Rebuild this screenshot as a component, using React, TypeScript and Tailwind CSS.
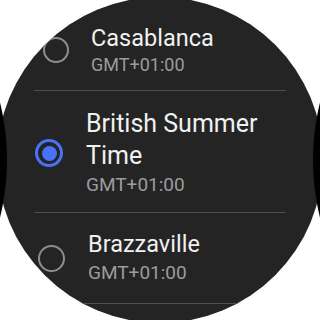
import type { ReactNode } from 'react'

type Zone = {
  name: ReactNode
  offset: string
  selected?: boolean
}

function Radio({ selected, className }: { selected?: boolean; className: string }) {
  if (selected) {
    return (
      <span className={`flex shrink-0 items-center justify-center rounded-full border-[3px] border-[#4a72f8] ${className}`}>
        <span className="h-[15px] w-[15px] rounded-full bg-[#4a72f8]" />
      </span>
    )
  }
  return <span className={`shrink-0 rounded-full border-2 border-[#8e8e8e] ${className}`} />
}

function Divider() {
  return <div className="ml-[34px] h-px w-[252px] bg-[#4f4f4f]" />
}

export default function App() {
  const zones: Zone[] = [
    { name: 'Casablanca', offset: 'GMT+01:00' },
    { name: 'British Summer Time', offset: 'GMT+01:00', selected: true },
    { name: 'Brazzaville', offset: 'GMT+01:00' },
  ]

  return (
    <div className="relative h-[320px] w-[320px] overflow-hidden bg-white font-['Roboto',sans-serif]">
      <div className="h-full w-full bg-[#242424] [clip-path:circle(163px_at_50%_50%)]">
        <div className="flex flex-col pt-[6px]">
          {/* Casablanca */}
          <div className="flex items-center pt-[17px] pb-[13px] pl-[43px]">
            <Radio className="h-[26px] w-[26px]" />
            <div className="ml-[22px] flex flex-col">
              <span className="text-[23.5px] leading-[30px] text-[#f1f1f1]">{zones[0].name}</span>
              <span className="text-[18px] leading-[24px] text-[#9c9c9c]">{zones[0].offset}</span>
            </div>
          </div>
          <Divider />

          {/* British Summer Time (selected) */}
          <div className="flex items-center pt-[17px] pb-[14px] pl-[35px]">
            <Radio selected className="h-[28px] w-[28px]" />
            <div className="ml-[23px] flex w-[200px] flex-col">
              <span className="text-[25px] leading-[32px] text-[#f1f1f1]">{zones[1].name}</span>
              <span className="text-[19px] leading-[26px] text-[#9c9c9c]">{zones[1].offset}</span>
            </div>
          </div>
          <Divider />

          {/* Brazzaville */}
          <div className="flex items-center pt-[16px] pb-[16px] pl-[38px]">
            <Radio className="h-[27px] w-[27px]" />
            <div className="ml-[23px] flex flex-col">
              <span className="text-[23.5px] leading-[30px] text-[#f1f1f1]">{zones[2].name}</span>
              <span className="text-[19px] leading-[28px] text-[#9c9c9c]">{zones[2].offset}</span>
            </div>
          </div>
          <Divider />
        </div>
      </div>

      {/* bezel shadow on the sides */}
      <div aria-hidden className="pointer-events-none absolute left-[-471px] top-[-79px] h-[478px] w-[478px] rounded-full bg-black" />
      <div aria-hidden className="pointer-events-none absolute left-[313px] top-[-79px] h-[478px] w-[478px] rounded-full bg-black" />
    </div>
  )
}
